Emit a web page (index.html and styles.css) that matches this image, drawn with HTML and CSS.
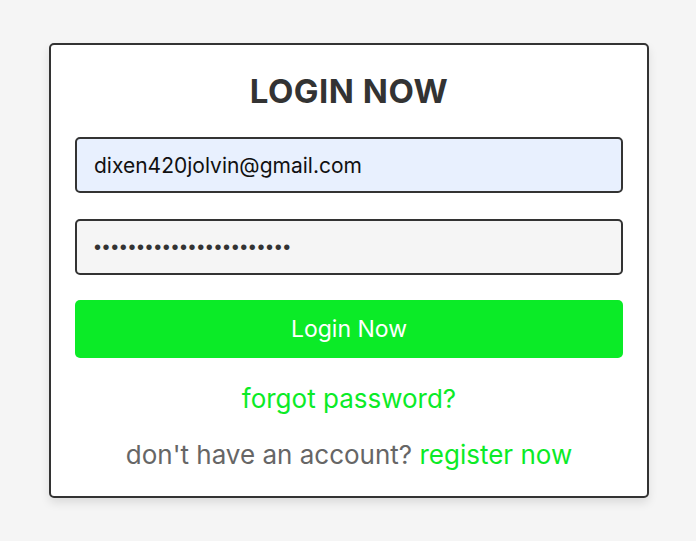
FILE: index.html
```html
<!DOCTYPE html>
<html lang="en">
<head>
<meta charset="utf-8">
<title>Login</title>
<link rel="stylesheet" href="styles.css">
</head>
<body>
<div class="page">
  <form class="card">
    <h3 class="title">Login Now</h3>
    <input class="field field-email" type="email" value="dixen420jolvin@gmail.com">
    <input class="field field-pass" type="password" value="abcdefghijklmnopqrstuvw">
    <button class="btn" type="button">Login Now</button>
    <p class="line"><a class="link" href="#">forgot password?</a></p>
    <p class="line muted">don't have an account? <a class="link" href="#">register now</a></p>
  </form>
</div>
</body>
</html>
```
FILE: styles.css
```css
* { box-sizing: border-box; }
html, body { margin: 0; padding: 0; }
body {
  background: #f5f5f5;
  font-family: "Inter", "Noto Sans", sans-serif;
  width: 696px;
  height: 541px;
}
.page {
  display: flex;
  justify-content: center;
  padding-top: 43px;
  padding-left: 2px;
}
.card {
  width: 600px;
  background: #fff;
  border: 2px solid #333;
  border-radius: 5px;
  box-shadow: 0 5px 10px rgba(0,0,0,0.1);
  padding: 20px 24px 23px;
  display: flex;
  flex-direction: column;
  align-items: stretch;
}
.title {
  margin: 0 0 20px;
  text-align: center;
  text-transform: uppercase;
  font-size: 33px;
  line-height: 52px;
  font-weight: 700;
  color: #333;
  letter-spacing: 0.5px;
}
.field {
  height: 56px;
  border: 2px solid #333;
  border-radius: 5px;
  padding: 0 17px;
  font-family: inherit;
  font-size: 21px;
  color: #111;
  outline: none;
}
.field-email { background: #e8f0fe; margin-bottom: 26px; }
.field-pass {
  background: #f5f5f5;
  margin-bottom: 25px;
  font-family: "Liberation Sans", sans-serif;
  font-size: 20px;
  letter-spacing: 1.6px;
  color: #333;
}
.btn {
  height: 58px;
  border: none;
  border-radius: 5px;
  background: #0beb27;
  color: #fff;
  font-family: inherit;
  font-size: 23px;
  cursor: pointer;
}
.line {
  margin: 23px 0 0;
  text-align: center;
  font-size: 26px;
  line-height: 36px;
}
.line + .line { margin-top: 20px; }
.muted { color: #666; }
.link { color: #0beb27; text-decoration: none; }
```
